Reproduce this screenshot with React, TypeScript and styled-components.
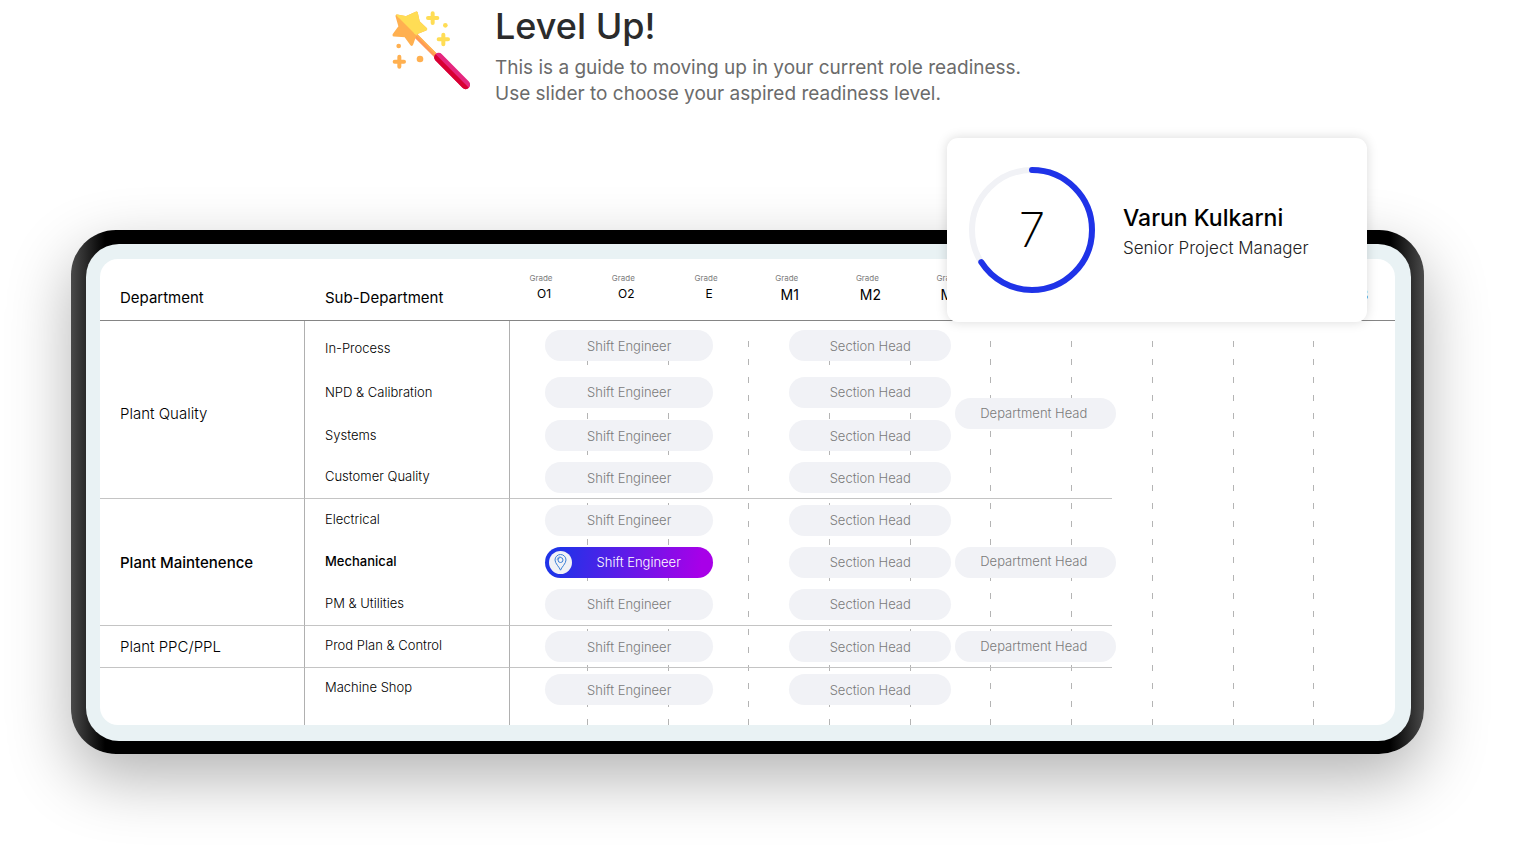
import React from "react";
import styled, { createGlobalStyle, css } from "styled-components";

const GlobalStyle = createGlobalStyle`
  *, *::before, *::after { box-sizing: border-box; }
  body {
    margin: 0;
    background: #fff;
    color: #000;
    font-family: Inter, "Open Sans", sans-serif;
  }
  h1, h2, p { margin: 0; font-weight: 400; }
`;

const Page = styled.main`
  padding: 2px 0 100px;
`;

const Intro = styled.header`
  display: flex;
  justify-content: center;
  gap: 25px;
`;

const IntroIcon = styled.svg`
  flex: none;
  width: 78px;
  height: 79px;
  margin-top: 9px;
`;

const IntroText = styled.div`
  width: 628px;
`;

const Title = styled.h1`
  font-size: 36px;
  font-weight: 500;
  line-height: 48px;
  color: #2b2b2b;
`;

const Lead = styled.p`
  margin-top: 5px;
  font-size: 19px;
  line-height: 26px;
  color: #6b6b6b;
`;

const Stage = styled.section`
  position: relative;
  margin: 123px 91px 0 71px;
`;

const Frame = styled.div`
  padding: 14px 13px 13px 15px;
  border-radius: 45px;
  background: linear-gradient(90deg, #4a4a4a 0, #2c2c2c 14px, #000 34px, #000 calc(100% - 34px), #2c2c2c calc(100% - 14px), #4a4a4a 100%);
  box-shadow: 0 24px 64px rgba(0, 0, 0, 0.3);
`;

const Bezel = styled.div`
  padding: 15px 16px 16px 14px;
  border-radius: 33px;
  background: #e9f2f4;
`;

const Screen = styled.div`
  display: grid;
  border-radius: 18px;
  background: #fff;
  overflow: hidden;
`;

const Guides = styled.div`
  grid-area: 1 / 1;
  display: grid;
  grid-template-columns: 78px repeat(10, 1fr);
  margin: 82px 0 0 410px;
`;

const Guide = styled.span`
  background: repeating-linear-gradient(#b4b4b4 0 6px, transparent 6px 18px) right top / 1px 100% no-repeat;

  &:last-child { background: none; }
`;

const Matrix = styled.table`
  grid-area: 1 / 1;
  position: relative;
  width: 100%;
  table-layout: fixed;
  border-collapse: separate;
  border-spacing: 0;

  th, td { padding: 0; text-align: left; }
`;

const Col = styled.col<{ $width?: number }>`
  ${({ $width }) => $width && css`width: ${$width}px;`}
`;

const HeadRow = styled.tr`
  height: 62px;

  th { border-bottom: 1px solid #858585; }
`;

const HeadCell = styled.th`
  && { padding: 16px 0 0 20px; }
  font-size: 15px;
  font-weight: 400;
`;

const GradeCell = styled.th`
  && { padding: 14px 0 0; text-align: center; }
  vertical-align: top;
  font-weight: 400;

  &&:nth-child(3) { padding-right: 10px; }
  &&:nth-child(4) { padding-right: 4px; }
  &&:last-child { padding-left: 6px; }
`;

const GradeCaption = styled.span`
  display: block;
  padding-right: 6px;
  font-size: 8px;
  line-height: 10px;
  color: #7d7d7d;
`;

const GradeName = styled.span<{ $large?: boolean }>`
  display: block;
  margin-top: 3px;
  font-size: ${({ $large }) => ($large ? 14 : 12)}px;
  line-height: ${({ $large }) => ($large ? 18 : 16)}px;
`;

const Group = styled.tbody<{ $open?: boolean }>`
  ${({ $open }) => !$open && css`
    tr:last-child > *, tr > [data-merged] { border-bottom: 1px solid #c4c4c4; }
    tr > [data-rest] { border-bottom: 0; }
  `}
`;

const Row = styled.tr<{ $height: number }>`
  height: ${({ $height }) => $height}px;
`;

const Department = styled.th<{ $current?: boolean; $shift?: boolean }>`
  && { padding: ${({ $shift }) => ($shift ? 8 : 0)}px 0 0 20px; }
  border-right: 1px solid #b0b0b0;
  font-size: 15px;
  font-weight: ${({ $current }) => ($current ? 500 : 300)};
`;

const SubDepartment = styled.th<{ $current?: boolean; $open?: boolean }>`
  && { padding: 0 0 ${({ $open }) => ($open ? 28 : 12)}px 20px; }
  border-right: 1px solid #b0b0b0;
  vertical-align: bottom;
  font-size: 13px;
  font-weight: ${({ $current }) => ($current ? 500 : 300)};
  line-height: 20px;
`;

const ShiftCell = styled.td<{ $open?: boolean }>`
  && { padding: 0 36px ${({ $open }) => ($open ? 14 : 0)}px 35px; }
`;

const SectionCell = styled.td<{ $open?: boolean }>`
  && { padding: 0 0 ${({ $open }) => ($open ? 14 : 0)}px 40px; }
`;

const HeadOfCell = styled.td<{ $shift?: boolean }>`
  && { padding: ${({ $shift }) => ($shift ? 8 : 0)}px 0 0; }
`;

const Pill = styled.span<{ $current?: boolean; $raised?: boolean }>`
  display: flex;
  align-items: center;
  justify-content: center;
  height: 31px;
  border-radius: 16px;
  background: #f1f2f6;
  color: #7a7a7a;
  font-size: 13px;
  font-weight: 300;

  ${({ $raised }) => $raised && css`
    width: 100%;
    margin-left: 4px;
    padding: 0 4px 2px 0;
  `}

  ${({ $current }) => $current && css`
    justify-content: flex-start;
    padding: 0 8px 0 4px;
    background: linear-gradient(100deg, #1f33e8 8%, #a800e8 92%);
    color: #fff;
  `}
`;

const PinBadge = styled.span`
  display: grid;
  place-items: center;
  width: 23px;
  height: 23px;
  border-radius: 50%;
  background: #f1f2f6;
`;

const PillLabel = styled.span`
  flex: 1;
  text-align: center;
`;

const ProfileCard = styled.aside`
  position: absolute;
  top: -92px;
  right: 57px;
  display: flex;
  align-items: center;
  gap: 28px;
  width: 420px;
  height: 184px;
  padding-left: 22px;
  border-radius: 11px;
  background: #fff;
  box-shadow: 0 0 12px rgba(0, 0, 0, 0.15);
`;

const Score = styled.div`
  display: grid;
  place-items: center;

  > * { grid-area: 1 / 1; }
`;

const ScoreValue = styled.span`
  font-size: 48px;
  font-weight: 200;
  line-height: 56px;
`;

const Profile = styled.div`
  padding-top: 4px;
`;

const ProfileName = styled.h2`
  font-size: 23px;
  font-weight: 500;
  line-height: 32px;
`;

const ProfileRole = styled.p`
  font-size: 17px;
  font-weight: 300;
  line-height: 28px;
  color: #222;
`;

const starPath = "M51 48 79 53 109 39 115 66 137 87 107 99 95 133 76 107 42 105 60 80Z";

const WandIcon = () => (
  <IntroIcon viewBox="36 33 234 237" aria-hidden="true">
    <clipPath id="star-light">
      <path d="M40 37 116 113 160 113 160 20 40 20Z" />
    </clipPath>
    <path d="M107 107 172 172" stroke="#ff9a56" strokeWidth="13" />
    <path d="M110 104 175 169" stroke="#ffb050" strokeWidth="6" />
    <g strokeLinejoin="round" strokeWidth="9">
      <path d={starPath} fill="#ffb050" stroke="#ffb050" />
      <path d={starPath} fill="#ffdd55" stroke="#ffdd55" clipPath="url(#star-light)" />
    </g>
    <path d="M176 172 257 254" stroke="#e5267e" strokeWidth="27" strokeLinecap="round" />
    <path d="M167 163 266.500 263.500A13.500 13.500 0 0 1 247.500 263.500L166.500 181.500A13.500 13.500 0 0 1 167 163Z" fill="#d80032" />
    <path d="M158 40V69M144 54H172M190 104V133M176 118H204" stroke="#ffdd55" strokeWidth="12" strokeLinecap="round" />
    <circle cx="196" cy="76" r="7" fill="#ffdd55" />
    <path d="M58 170V200M44 185H72" stroke="#ffb050" strokeWidth="12" strokeLinecap="round" />
    <circle cx="56" cy="138" r="7" fill="#ffb050" />
    <circle cx="120" cy="177" r="10" fill="#ffb050" />
  </IntroIcon>
);

const PinIcon = () => (
  <svg width="13" height="17" viewBox="0 0 13 17" fill="none" stroke="#3a7fd5" strokeWidth="1" aria-hidden="true">
    <path d="M6.500 16.200C5.500 13.200 1 9.500 1 6A5.500 5.500 0 0 1 12 6C12 9.500 7.500 13.200 6.500 16.200Z" />
    <circle cx="6.500" cy="6" r="2.500" />
    <path d="M3 6A3.700 3.700 0 0 1 6.500 2.500" strokeWidth=".6" />
  </svg>
);

const ScoreRing = () => (
  <svg width="126" height="126" viewBox="0 0 126 126" fill="none" strokeWidth="6" aria-hidden="true">
    <circle cx="63" cy="63" r="60" stroke="#f1f2f6" />
    <circle
      cx="63"
      cy="63"
      r="60"
      stroke="#1f33e8"
      strokeLinecap="round"
      pathLength="100"
      strokeDasharray="66 100"
      transform="rotate(-90 63 63)"
    />
  </svg>
);

const grades = ["O1", "O2", "E", "M1", "M2", "M3", "M4", "M5", "M6", "M7", "M8"];

type SubRow = { name: string; height: number; current?: boolean };
type DepartmentGroup = { name: string; current?: boolean; head?: boolean; rows: SubRow[] };

const departments: DepartmentGroup[] = [
  {
    name: "Plant Quality",
    head: true,
    rows: [
      { name: "In-Process", height: 49 },
      { name: "NPD & Calibration", height: 44 },
      { name: "Systems", height: 43 },
      { name: "Customer Quality", height: 42 },
    ],
  },
  {
    name: "Plant Maintenence",
    current: true,
    head: true,
    rows: [
      { name: "Electrical", height: 42 },
      { name: "Mechanical", height: 42, current: true },
      { name: "PM & Utilities", height: 43 },
    ],
  },
  { name: "Plant PPC/PPL", head: true, rows: [{ name: "Prod Plan & Control", height: 42 }] },
  { name: "", rows: [{ name: "Machine Shop", height: 57 }] },
];

const ReadinessMatrix = () => (
  <Matrix>
    <colgroup>
      <Col $width={205} />
      <Col $width={205} />
      <Col $width={39} />
      <Col $width={39} />
      {grades.slice(1).map((grade) => (
        <React.Fragment key={grade}>
          <Col />
          <Col />
        </React.Fragment>
      ))}
    </colgroup>
    <thead>
      <HeadRow>
        <HeadCell scope="col">Department</HeadCell>
        <HeadCell scope="col">Sub-Department</HeadCell>
        {grades.map((grade) => (
          <GradeCell key={grade} scope="col" colSpan={2}>
            <GradeCaption>Grade</GradeCaption>
            <GradeName $large={grade.startsWith("M")}>{grade}</GradeName>
          </GradeCell>
        ))}
      </HeadRow>
    </thead>
    {departments.map((department, groupIndex) => {
      const open = groupIndex === departments.length - 1;
      const shift = groupIndex === 0;
      const span = department.rows.length;
      return (
        <Group key={groupIndex} $open={open}>
          {department.rows.map((row, rowIndex) => (
            <Row key={row.name} $height={row.height}>
              {rowIndex === 0 && (
                <Department data-merged scope="rowgroup" rowSpan={span} $current={department.current} $shift={shift}>
                  {department.name}
                </Department>
              )}
              <SubDepartment scope="row" $current={row.current} $open={open}>
                {row.name}
              </SubDepartment>
              <ShiftCell colSpan={6} $open={open}>
                {row.current ? (
                  <Pill $current>
                    <PinBadge>
                      <PinIcon />
                    </PinBadge>
                    <PillLabel>Shift Engineer</PillLabel>
                  </Pill>
                ) : (
                  <Pill>Shift Engineer</Pill>
                )}
              </ShiftCell>
              <SectionCell colSpan={5} $open={open}>
                <Pill>Section Head</Pill>
              </SectionCell>
              {rowIndex === 0 && (
                <>
                  <HeadOfCell data-merged colSpan={4} rowSpan={span} $shift={shift}>
                    {department.head && <Pill $raised>Department Head</Pill>}
                  </HeadOfCell>
                  <td data-rest colSpan={7} rowSpan={span} />
                </>
              )}
            </Row>
          ))}
        </Group>
      );
    })}
  </Matrix>
);

export default function App() {
  return (
    <>
      <GlobalStyle />
      <Page>
        <Intro>
          <WandIcon />
          <IntroText>
            <Title>Level Up!</Title>
            <Lead>
              This is a guide to moving up in your current role readiness.
              <br />
              Use slider to choose your aspired readiness level.
            </Lead>
          </IntroText>
        </Intro>
        <Stage>
          <Frame>
            <Bezel>
              <Screen>
                <Guides aria-hidden="true">
                  {grades.map((grade) => (
                    <Guide key={grade} />
                  ))}
                </Guides>
                <ReadinessMatrix />
              </Screen>
            </Bezel>
          </Frame>
          <ProfileCard>
            <Score>
              <ScoreRing />
              <ScoreValue>7</ScoreValue>
            </Score>
            <Profile>
              <ProfileName>Varun Kulkarni</ProfileName>
              <ProfileRole>Senior Project Manager</ProfileRole>
            </Profile>
          </ProfileCard>
        </Stage>
      </Page>
    </>
  );
}
